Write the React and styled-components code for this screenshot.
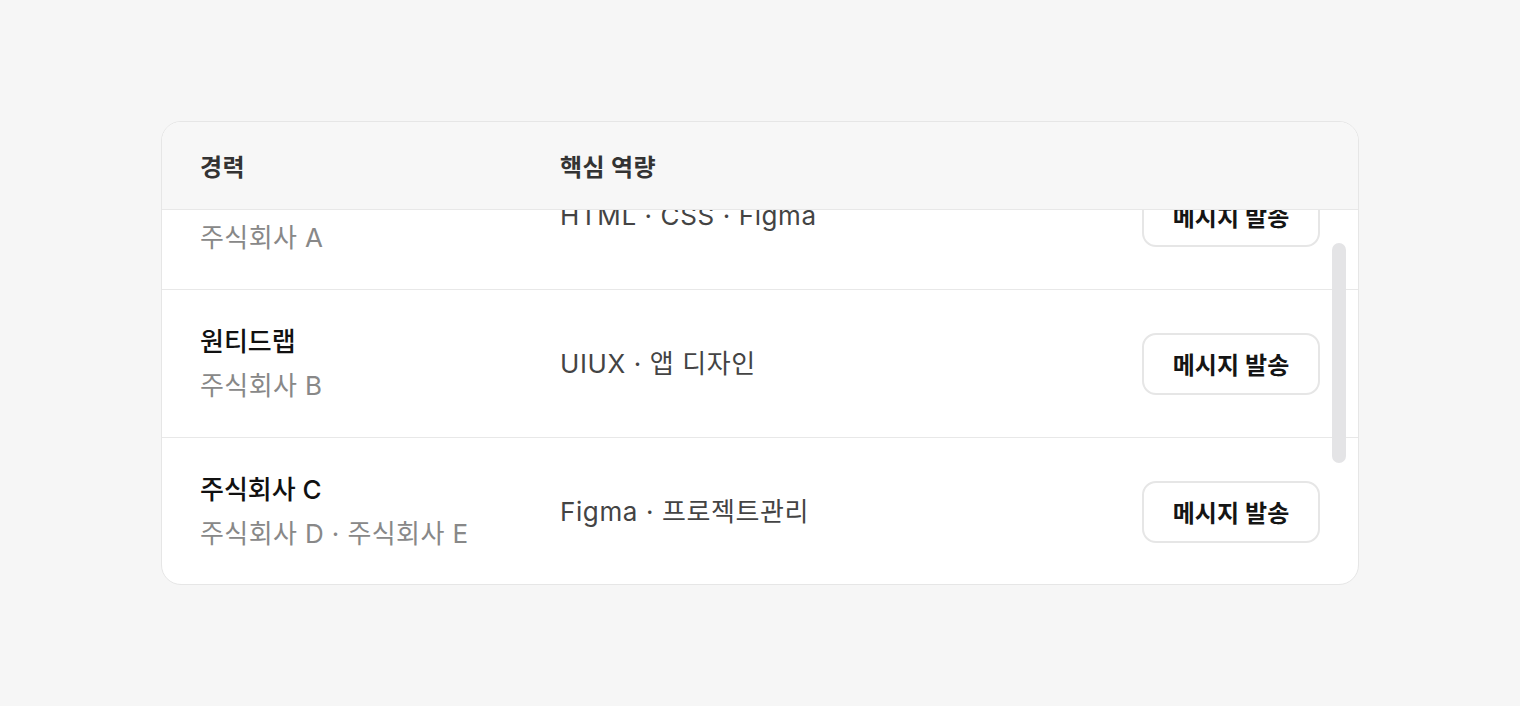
import React, { useLayoutEffect, useRef } from "react";
import styled, { createGlobalStyle } from "styled-components";

const Global = createGlobalStyle`
  html, body { margin: 0; padding: 0; background: #f6f6f6; }
  body { font-family: Inter, "Noto Sans CJK KR", sans-serif; -webkit-font-smoothing: antialiased; }
  * { box-sizing: border-box; }
`;

const Page = styled.div`
  width: 1520px;
  height: 706px;
  padding: 121px 161px 0;
`;

const Card = styled.div`
  position: relative;
  height: 464px;
  border: 1px solid #e6e6e6;
  border-radius: 20px;
  background: #fff;
  overflow: hidden;
`;

const Scroller = styled.div`
  height: 100%;
  overflow-y: auto;
  scrollbar-width: none;
  &::-webkit-scrollbar { display: none; }
`;

const Grid = `
  display: grid;
  grid-template-columns: 360px 1fr 178px;
  align-items: center;
  padding: 0 38px 0 38px;
`;

const Header = styled.div`
  ${Grid}
  position: sticky;
  top: 0;
  z-index: 2;
  height: 88px;
  background: #f7f7f7;
  border-bottom: 1px solid #e8e8e8;
`;

const HeadLabel = styled.div`
  font-size: 24px;
  font-weight: 600;
  color: #333;
  letter-spacing: 0.3px;
`;

const Row = styled.div`
  ${Grid}
  height: 148px;
  border-bottom: 1px solid ${(p) => (p.$last ? "transparent" : "#e8e8e8")};
`;

const Career = styled.div`
  display: flex;
  flex-direction: column;
  gap: 8px;
`;

const Title = styled.div`
  font-size: 26px;
  line-height: 36px;
  font-weight: 500;
  color: #111;
`;

const Sub = styled.div`
  font-size: 26px;
  line-height: 36px;
  color: #888;
  letter-spacing: 0.4px;
`;

const Skills = styled.div`
  font-size: 26px;
  line-height: 36px;
  color: #444;
  letter-spacing: 0.6px;
`;

const Button = styled.button`
  width: 178px;
  height: 62px;
  border: 2px solid #e6e6e6;
  border-radius: 14px;
  background: #fff;
  font-family: inherit;
  font-size: 24px;
  font-weight: 600;
  color: #151515;
  cursor: pointer;
`;

const Thumb = styled.div`
  position: absolute;
  top: 121px;
  right: 12px;
  width: 14px;
  height: 220px;
  border-radius: 7px;
  background: #e4e4e6;
  z-index: 3;
`;

const rows = [
  { title: "주식회사 원티드랩", sub: "주식회사 A", skills: "HTML · CSS · Figma" },
  { title: "원티드랩", sub: "주식회사 B", skills: "UIUX · 앱 디자인" },
  { title: "주식회사 C", sub: "주식회사 D · 주식회사 E", skills: "Figma · 프로젝트관리" },
];

export default function App() {
  const ref = useRef(null);
  useLayoutEffect(() => {
    if (ref.current) ref.current.scrollTop = 68;
  }, []);
  return (
    <>
      <Global />
      <Page>
        <Card>
          <Scroller ref={ref}>
            <Header>
              <HeadLabel>경력</HeadLabel>
              <HeadLabel>핵심 역량</HeadLabel>
              <div />
            </Header>
            {rows.map((r, i) => (
              <Row key={i} $last={i === rows.length - 1}>
                <Career>
                  <Title>{r.title}</Title>
                  <Sub>{r.sub}</Sub>
                </Career>
                <Skills>{r.skills}</Skills>
                <Button>메시지 발송</Button>
              </Row>
            ))}
          </Scroller>
          <Thumb />
        </Card>
      </Page>
    </>
  );
}
